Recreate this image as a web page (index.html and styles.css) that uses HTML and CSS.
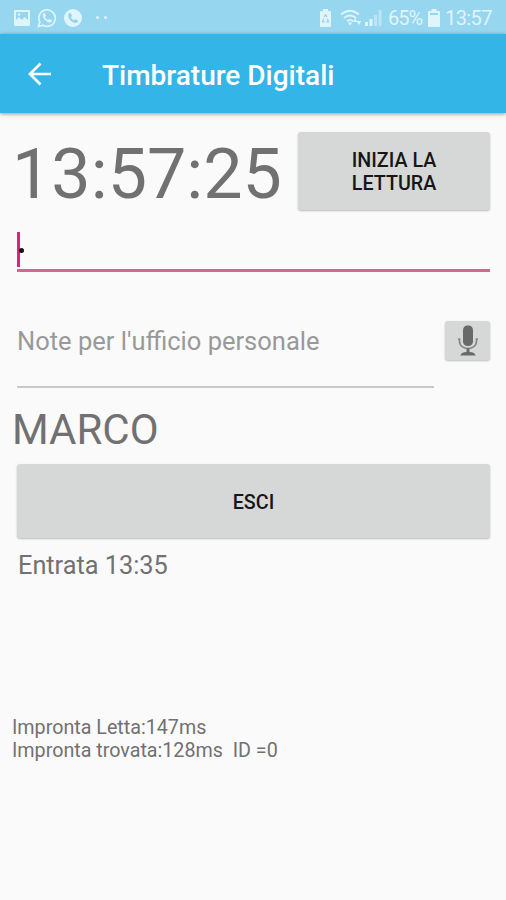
FILE: index.html
```html
<!DOCTYPE html>
<html lang="it">
	<head>
		<meta charset="UTF-8">
		<title>Timbrature Digitali</title>
		<link rel="stylesheet" href="styles.css">
	</head>
	<body>

		<div class="status">
			<svg class="ico-img" width="18" height="18" viewBox="0 0 18 18">
				<path fill="currentColor" fill-rule="evenodd" d="M2 1h14q1 0 1 1v14q0 1-1 1H2q-1 0-1-1V2q0-1 1-1zM3 3v8l3-3 3 3 2.500-3 3.500 3V3z"/>
				<circle cx="6" cy="5.500" r="1.200" fill="currentColor"/>
			</svg>
			<svg class="ico-wa" width="20" height="20" viewBox="0 0 20 20">
				<path fill="none" stroke="currentColor" stroke-width="1.700" d="M1.500 18.500l1.300-4.600A8.200 8.200 0 1 1 6 17.200z"/>
				<path fill="currentColor" d="M6 5.600l1.500-.8 1.500 2.800-1 1.300c.8 1.600 1.600 2.400 3.200 3.200l1.300-1.100 2.700 1.400-.7 1.700c-4 2-10-4-8.500-8.500z"/>
			</svg>
			<svg class="ico-call" width="18" height="18" viewBox="0 0 18 18">
				<circle cx="9" cy="9" r="9" fill="currentColor"/>
				<path fill="#93d4ee" d="M4.600 4.800l1.800-1.100 1.700 3.100-1.200 1.400c.8 1.500 1.500 2.200 3 3l1.400-1.200 3 1.700-1 1.800c-4.200 2.200-10.600-4.300-8.700-8.700z"/>
			</svg>
			<span class="dots"><i></i><i></i></span>

			<div class="status-right">
				<svg width="13" height="18" viewBox="0 0 13 18">
					<path fill="currentColor" fill-rule="evenodd" d="M4 0h5v2h2q1 0 1 1v14q0 1-1 1H2q-1 0-1-1V3q0-1 1-1h2zM6.500 4.500L4.500 7.500l1.200.7.800-1.300.8 1.300 1.200-.7zM4 9.500l-1.300 4h2.800v-1.400H4.600l.6-2zM9 9.500l-1.200.6.600 2h-.9v1.400h2.800z"/>
				</svg>
				<svg class="ico-wifi" width="22" height="18" viewBox="0 0 22 18">
					<g fill="none" stroke="currentColor" stroke-width="1.800">
						<path d="M1 5.500q9-7.500 18 0"/>
						<path d="M4 9q6-5 12 0"/>
						<path d="M7 12.200q3-2.600 6 0"/>
					</g>
					<path fill="currentColor" d="M8 13.800q2-1.300 4 0L10 16.500zM13 13l2.200-4 2.200 4zM16.800 12h4.400L19 16z"/>
				</svg>
				<svg class="ico-signal" width="17" height="17" viewBox="0 0 17 17">
					<path fill="currentColor" d="M0 13h3v4H0zM4.500 10h3v7h-3z"/>
					<path fill="currentColor" opacity=".5" d="M9 6h3v11H9zM13.500 1h3v16h-3z"/>
				</svg>
				<span class="percent">65%</span>
				<svg class="ico-bat" width="12" height="18" viewBox="0 0 12 18">
					<path fill="currentColor" fill-rule="evenodd" d="M3.500 0h5v2H11q1 0 1 1v14q0 1-1 1H1q-1 0-1-1V3q0-1 1-1h2.500zM2 4v2h8V4z"/>
				</svg>
				<span class="ora">13:57</span>
			</div>
		</div>

		<header class="toolbar">
			<svg class="back" width="24" height="24" viewBox="0 0 24 24">
				<path fill="none" stroke="#fff" stroke-width="2.700" d="M24 12H3.500M13.500 1.500L3 12l10.500 10.500"/>
			</svg>
			<h1>Timbrature Digitali</h1>
		</header>

		<main>
			<div class="row">
				<div class="clock">13:57:25</div>
				<button class="btn btn-lettura">INIZIA LA<br>LETTURA</button>
			</div>

			<div class="campo">
				<span class="cursor"></span><span class="punto"></span>
			</div>

			<div class="note-row">
				<div class="note">Note per l'ufficio personale</div>
				<button class="btn btn-mic">
					<svg width="20" height="32" viewBox="0 0 20 32">
						<rect x="5" y="0.500" width="10" height="20.500" rx="4.500" fill="#686a6a"/>
						<path fill="none" stroke="#858787" stroke-width="1.700" d="M0 14h1.500v2c0 10 17 10 17 0v-2H20"/>
						<path fill="#686a6a" d="M8.500 23.500h3V27q5.500.3 6 3.500h-15Q3 27.300 8.500 27z"/>
					</svg>
				</button>
			</div>

			<div class="nome">MARCO</div>
			<button class="btn btn-esci">ESCI</button>
			<div class="entrata">Entrata 13:35</div>

			<div class="log">Impronta Letta:147ms
Impronta trovata:128ms  ID =0</div>
		</main>

	</body>
</html>
```
FILE: styles.css
```css
* {
	box-sizing: border-box;
}

body {
	margin: 0;
	height: 900px;
	overflow: hidden;
	background: #fafafa;
	color: #717171;
	font-family: Roboto, "Liberation Sans", sans-serif;
}

svg {
	display: block;
	flex: none;
}

.status {
	display: flex;
	align-items: center;
	height: 34px;
	padding: 1px 14px 0 13px;
	background: #96d6ef;
	color: #e0f4fb;
}

.ico-wa {
	margin-left: 6px;
}

.ico-call {
	margin-left: 7px;
}

.dots {
	display: flex;
	gap: 5px;
	margin-left: 14px;
}

.dots i {
	width: 3px;
	height: 3px;
	border-radius: 50%;
	background: #d9f1fa;
}

.status-right {
	display: flex;
	align-items: center;
	margin-left: auto;
	font-size: 20px;
	line-height: 34px;
}

.ico-wifi {
	margin-left: 8px;
}

.ico-signal {
	margin-left: 3px;
}

.percent {
	width: 34px;
	margin-left: 6px;
	font-size: 20px;
	letter-spacing: -1px;
}

.ico-bat {
	margin-left: 6px;
}

.ora {
	width: 47px;
	margin-left: 5px;
	letter-spacing: -0.6px;
	white-space: nowrap;
}

.toolbar {
	display: flex;
	align-items: center;
	height: 79px;
	padding-left: 27px;
	background: #33b5e8;
	box-shadow: 0 1px 4px rgba(0, 0, 0, 0.4);
}

.toolbar h1 {
	margin: 5px 0 0 51px;
	color: #fff;
	font-size: 28px;
	font-weight: 500;
	line-height: 32px;
}

main {
	padding: 19px 16px 0 12px;
}

.row {
	display: flex;
	justify-content: space-between;
	height: 79px;
}

.clock {
	font-size: 70px;
	line-height: 84px;
}

.btn {
	display: block;
	padding: 0;
	border: 0;
	border-radius: 3px;
	background: #d6d8d7;
	box-shadow: 0 1px 2px rgba(0, 0, 0, 0.25);
	color: #161616;
	font: 500 19.7px/23px Roboto, "Liberation Sans", sans-serif;
}

.btn-lettura {
	width: 192px;
	height: 78px;
	padding-top: 2px;
}

.campo {
	display: flex;
	align-items: center;
	height: 61px;
	margin-left: 5px;
	padding-top: 21px;
	border-bottom: 3px solid #d9648f;
	padding-bottom: 2px;
}

.cursor {
	width: 3px;
	height: 35px;
	background: #e0207c;
}

.punto {
	width: 5px;
	height: 5px;
	margin-top: 2px;
	margin-left: -1px;
	border-radius: 50%;
	background: #111;
}

.note-row {
	display: flex;
	justify-content: space-between;
	margin: 49px 0 0 5px;
}

.note {
	width: 417px;
	height: 67px;
	border-bottom: 2px solid #c8c8c8;
	color: #999;
	font-size: 25.5px;
	line-height: 41px;
}

.btn-mic {
	display: flex;
	justify-content: center;
	width: 45px;
	height: 39px;
	padding-top: 4px;
}

.nome {
	height: 76px;
	padding-top: 16px;
	font-size: 42px;
	line-height: 52px;
}

.btn-esci {
	width: 473px;
	height: 74px;
	margin-left: 5px;
	padding-top: 2px;
}

.entrata {
	margin: 12px 0 0 6px;
	font-size: 25.3px;
	line-height: 31px;
}

.log {
	margin-top: 135px;
	font-size: 19.7px;
	line-height: 23px;
	white-space: pre;
}
```
